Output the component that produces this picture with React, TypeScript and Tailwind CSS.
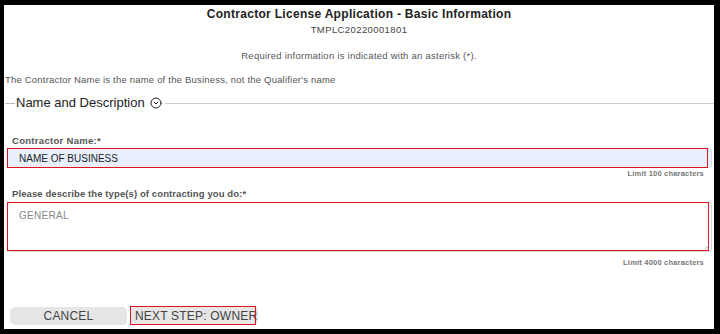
import { CircleChevronDown } from "lucide-react";

const font = { fontFamily: '"Liberation Sans", Arial, sans-serif' };

export default function App() {
  return (
    <div
      className="h-[334px] w-[720px] bg-black pt-[5px] pl-[4px] pr-[6px] pb-[5px]"
      style={font}
    >
      <div className="flex h-full flex-col bg-white">
        <div className="h-[18px] text-center text-[12px] font-bold leading-[18px] tracking-[0.3px] text-[#222]">
          Contractor License Application - Basic Information
        </div>
        <div className="h-[14px] text-center text-[9.5px] leading-[14px] tracking-[0.4px] text-[#444]">
          TMPLC20220001801
        </div>
        <div className="mt-[12px] h-[14px] text-center text-[9.5px] leading-[14px] tracking-[0.25px] text-[#555]">
          Required information is indicated with an asterisk (*).
        </div>
        <div className="mt-[10px] h-[14px] pl-[1px] text-[9.5px] leading-[14px] tracking-[0.2px] text-[#555]">
          The Contractor Name is the name of the Business, not the Qualifier's name
        </div>

        <div className="mt-[7px] flex h-[18px] items-center">
          <div className="ml-[1px] h-px w-[10px] bg-[#bbb]" />
          <span className="ml-[1px] text-[13px] leading-[18px] text-[#222]">
            Name and Description
          </span>
          <CircleChevronDown
            size={12}
            strokeWidth={2}
            className="ml-[5px] text-[#222]"
          />
          <div className="ml-[3px] h-px flex-1 bg-[#ccc]" />
        </div>

        <div className="mt-[22px] h-[14px] pl-[8px] text-[9.5px] font-bold leading-[14px] tracking-[0.3px] text-[#555]">
          Contractor Name:*
        </div>
        <div className="relative ml-[3px] mr-[2px] flex h-[20px] items-center rounded-[3px] border border-[#d6dbe3] bg-[#e8f0fe] pl-[11px] text-[10px] tracking-[0px] text-[#222]">
          NAME OF BUSINESS
          <div className="absolute -top-px -left-px -bottom-px right-[3px] border border-[#e0141e]" />
        </div>
        <div className="h-[12px] pr-[10px] text-right text-[7.5px] font-bold leading-[12px] tracking-[0.2px] text-[#777]">
          Limit 100 characters
        </div>

        <div className="mt-[7px] h-[14px] pl-[8px] text-[9.5px] font-bold leading-[14px] tracking-[0.1px] text-[#555]">
          Please describe the type(s) of contracting you do:*
        </div>
        <div className="relative mt-px ml-[3px] mr-[2px] h-[50px] rounded-[3px] border border-[#d6d6d6] bg-white pt-[5px] pl-[11px] text-[10px] tracking-[0.3px] text-[#888]">
          GENERAL
          <div className="absolute -top-px -left-px bottom-0 right-[2px] border border-[#e0141e]" />
          <svg
            width="6"
            height="6"
            viewBox="0 0 6 6"
            className="absolute right-[1px] bottom-[1px]"
          >
            <path d="M5 1 L1 5 M5 3.5 L3.5 5" stroke="#999" strokeWidth="0.8" />
          </svg>
        </div>
        <div className="mt-[5px] h-[12px] pr-[10px] text-right text-[7.5px] font-bold leading-[12px] tracking-[0.2px] text-[#777]">
          Limit 4000 characters
        </div>

        <div className="mt-[37px] flex items-center gap-[3px] pl-[6px]">
          <button className="flex h-[18px] w-[117px] items-center justify-center rounded-[5px] bg-[#e6e6e6] text-[12px] tracking-[0.2px] text-[#444]">
            CANCEL
          </button>
          <button className="relative flex h-[19px] w-[128px] items-center whitespace-nowrap rounded-[5px] bg-[#e6e6e6] pl-[5px] text-[12px] tracking-[0.2px] text-[#444]">
            NEXT STEP: OWNER
            <div className="absolute top-0 left-0 bottom-0 right-[2px] border border-[#e0141e]" />
          </button>
        </div>
      </div>
    </div>
  );
}
